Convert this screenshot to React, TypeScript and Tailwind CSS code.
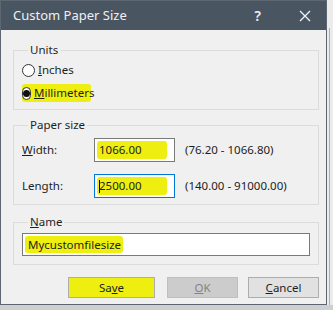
import React from 'react';

const font = { fontFamily: '"Segoe UI", "Noto Sans", sans-serif' };

function Radio({ checked }: { checked?: boolean }) {
  return (
    <span className="flex h-[13px] w-[13px] items-center justify-center rounded-full border border-[#333] bg-white">
      {checked && <span className="h-[7px] w-[7px] rounded-full bg-[#111]" />}
    </span>
  );
}

function Box({ title, className, children }: { title: React.ReactNode; className?: string; children: React.ReactNode }) {
  return (
    <fieldset className={`w-[306px] border border-[#dcdcdc] px-[8px] ${className ?? ''}`}>
      <legend className="ml-[6px] px-[2px] text-[11.5px] leading-[14px] text-[#1e1e1e]">{title}</legend>
      {children}
    </fieldset>
  );
}

export default function App() {
  return (
    <div className="relative h-[310px] w-[333px] overflow-hidden bg-[#cfcfcf]" style={font}>
      <div className="flex h-[310px]">
        <div className="flex h-[305px] w-[327px] flex-col border border-[#5d6772] bg-[#f0f0f0]">
          {/* title bar */}
          <div className="flex h-[29px] shrink-0 items-center bg-[#4a5562] pl-[12px] pr-[14px] text-[#eef0f2]">
            <span className="text-[13px]">Custom Paper Size</span>
            <span className="ml-auto mr-[38px] text-[14px] font-semibold">?</span>
            <svg width="12" height="12" viewBox="0 0 12 12" className="mr-[1px]">
              <path d="M1 1 L11 11 M11 1 L1 11" stroke="#eef0f2" strokeWidth="1.4" />
            </svg>
          </div>

          <div className="flex flex-col pl-[12px] pt-[13px] text-[11.5px] text-[#1e1e1e]">
            <Box title="Units" className="pb-[7px]">
              <div className="mt-[5px] flex h-[16px] items-center gap-[3px]">
                <Radio />
                <span><u>I</u>nches</span>
              </div>
              <div className="mt-[6px] flex h-[18px] w-[69px] items-center gap-[3px] rounded-[3px] bg-[#eeee10]">
                <Radio checked />
                <span><u>M</u>illimeters</span>
              </div>
            </Box>

            <Box title="Paper size" className="mt-[8px] pb-[6px]">
              <div className="mt-[6px] flex items-center">
                <span className="w-[72px]"><u>W</u>idth:</span>
                <div className="flex h-[24px] w-[81px] items-center border border-[#7a7a7a] bg-white p-[2px]">
                  <div className="flex h-full w-[70px] items-center rounded-[3px] bg-[#eeee10] pl-[2px]">1066.00</div>
                </div>
                <span className="ml-[10px]">(76.20 - 1066.80)</span>
              </div>
              <div className="mt-[12px] flex items-center">
                <span className="w-[72px]">Length:</span>
                <div className="flex h-[24px] w-[81px] items-center border border-[#0078d7] bg-white p-[2px]">
                  <div className="flex h-full w-[70px] items-center rounded-[3px] bg-[#eeee10] pl-[2px]">
                    <span className="mr-[-1px] h-[13px] w-[1px] bg-black" />
                    2500.00
                  </div>
                </div>
                <span className="ml-[10px]">(140.00 - 91000.00)</span>
              </div>
            </Box>

            <Box title={<><u>N</u>ame</>} className="mt-[10px] pb-[8px]">
              <div className="mt-[4px] flex h-[23px] w-[288px] items-center border border-[#7a7a7a] bg-white p-[2px]">
                <div className="flex h-full w-[98px] items-center rounded-[3px] bg-[#eeee10] pl-[3px]">Mycustomfilesize</div>
              </div>
            </Box>

            <div className="mt-[12px] flex items-center">
              <div className="ml-[55px] flex h-[21px] w-[87px] items-center justify-center border border-[#adadad] bg-[#eeee10]">
                Sa<u>v</u>e
              </div>
              <div className="ml-[12px] flex h-[21px] w-[71px] items-center justify-center border border-[#bfbfbf] bg-[#cccccc] text-[#838383]">
                <u>O</u>K
              </div>
              <div className="ml-[10px] flex h-[21px] w-[71px] items-center justify-center border border-[#adadad] bg-[#e1e1e1]">
                <u>C</u>ancel
              </div>
            </div>
          </div>
        </div>
        <div className="flex h-[305px] flex-1 bg-[#ececec] pt-[28px]">
          <div className="ml-[2px] w-[1px] bg-[#b0b0b0]" />
        </div>
      </div>
    </div>
  );
}
